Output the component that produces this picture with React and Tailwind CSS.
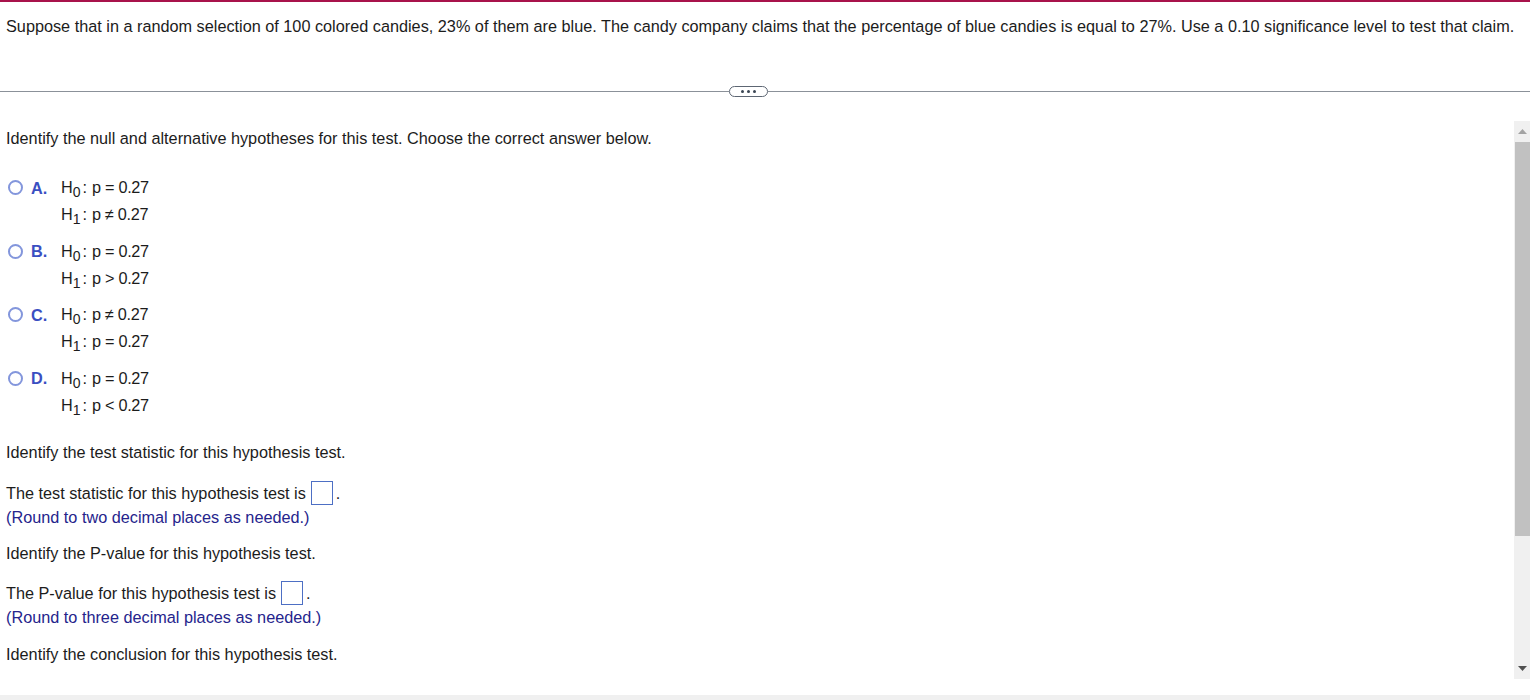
import React from "react";

const options = [
  { key: "A", h0: "p = 0.27", h1: "p ≠ 0.27" },
  { key: "B", h0: "p = 0.27", h1: "p > 0.27" },
  { key: "C", h0: "p ≠ 0.27", h1: "p = 0.27" },
  { key: "D", h0: "p = 0.27", h1: "p < 0.27" },
];

const Hyp = ({ sub, expr }) => (
  <div className="h-[27px] leading-[27px] flex items-center">
    <span>H</span>
    <span className="text-[14px] relative top-[5px]">{sub}</span>
    <span className="ml-[2px]">:</span>
    <span className="ml-[5px] tracking-[-0.3px]">{expr}</span>
  </div>
);

const AnswerBox = () => (
  <span className="inline-block w-[22px] h-[24px] border border-[#4d6fc4] bg-white ml-[5px] mr-[3px]" />
);

const App = () => {
  return (
    <div
      className="h-[700px] w-[1530px] flex flex-col bg-white border-t-2 border-[#a8134b] text-[16.25px] text-[#1c1c1c] overflow-hidden"
      style={{ fontFamily: '"Liberation Sans", Arial, sans-serif' }}
    >
      {/* question header */}
      <div className="h-[89px] pt-[15px] pl-[6px] leading-[18px] whitespace-nowrap">
        Suppose that in a random selection of 100 colored candies, 23% of them are blue. The candy company claims that the
        percentage of blue candies is equal to 27%. Use a 0.10 significance level to test that claim.
      </div>

      {/* divider with expand pill */}
      <div className="h-[1px] flex items-center">
        <div className="w-[729px] h-[1px] bg-[#8b9199]" />
        <div className="w-[39px] h-[11px] rounded-full border border-[#5d6673] bg-white flex items-center justify-center gap-[3px]">
          <span className="w-[3px] h-[3px] rounded-full bg-[#3b4654]" />
          <span className="w-[3px] h-[3px] rounded-full bg-[#3b4654]" />
          <span className="w-[3px] h-[3px] rounded-full bg-[#3b4654]" />
        </div>
        <div className="flex-1 h-[1px] bg-[#8b9199]" />
      </div>

      <div className="h-[29px]" />

      {/* scrolling answer panel */}
      <div className="h-[558px] flex">
        <div className="flex-1 pl-[6px] pt-[8px] leading-[18px]">
          <p>Identify the null and alternative hypotheses for this test. Choose the correct answer below.</p>

          <div className="mt-[27px] flex flex-col gap-[9.6px]">
            {options.map((o) => (
              <div key={o.key} className="flex">
                <div className="w-[55px] h-[27px] flex items-center">
                  <span className="ml-[2px] w-[15px] h-[15px] rounded-full border-2 border-[#8396dc]" />
                  <span className="ml-[8px] font-bold text-[#3a4fc2]">{o.key}.</span>
                </div>
                <div>
                  <Hyp sub="0" expr={o.h0} />
                  <Hyp sub="1" expr={o.h1} />
                </div>
              </div>
            ))}
          </div>

          <p className="mt-[24px]">Identify the test statistic for this hypothesis test.</p>

          <div className="mt-[20px] h-[24px] flex items-center">
            The test statistic for this hypothesis test is
            <AnswerBox />.
          </div>
          <p className="mt-[3px] text-[#25248c]">(Round to two decimal places as needed.)</p>

          <p className="mt-[18px]">Identify the P-value for this hypothesis test.</p>

          <div className="mt-[19px] h-[24px] flex items-center">
            The P-value for this hypothesis test is
            <AnswerBox />.
          </div>
          <p className="mt-[3px] text-[#25248c]">(Round to three decimal places as needed.)</p>

          <p className="mt-[19px]">Identify the conclusion for this hypothesis test.</p>
        </div>

        {/* scrollbar */}
        <div className="w-[16px] bg-[#f0f0f0] flex flex-col items-center">
          <div className="h-[21px] flex items-center justify-center">
            <svg width="9" height="5" viewBox="0 0 9 5">
              <path d="M0 5 L4.5 0 L9 5 Z" fill="#a3a3a3" />
            </svg>
          </div>
          <div className="w-[15px] h-[394px] ml-[1px] bg-[#c1c1c1]" />
          <div className="flex-1" />
          <div className="h-[21px] flex items-center justify-center">
            <svg width="9" height="5" viewBox="0 0 9 5">
              <path d="M0 0 L9 0 L4.5 5 Z" fill="#505050" />
            </svg>
          </div>
        </div>
      </div>

      <div className="h-[16px]" />
      <div className="flex-1 bg-[#f0f0f0]" />
    </div>
  );
};

export default App;
